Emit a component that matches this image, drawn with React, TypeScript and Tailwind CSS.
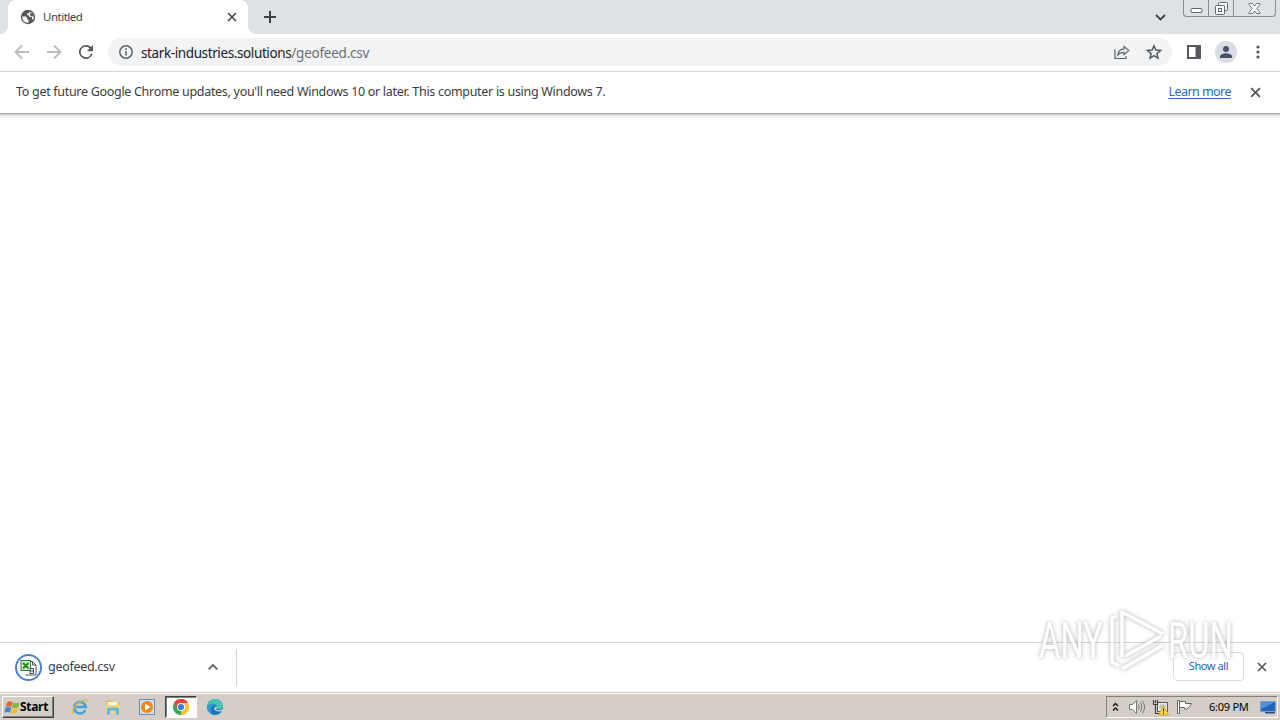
import type { ReactNode } from 'react'

function IconButton({ label, className, children }: { label: string; className: string; children: ReactNode }) {
  return (
    <button aria-label={label} className={`flex shrink-0 items-center justify-center ${className}`}>
      {children}
    </button>
  )
}

function Cross({ className }: { className: string }) {
  return (
    <svg viewBox="0 0 10 10" className={className} fill="none" stroke="currentColor" strokeWidth="1.7">
      <path d="M1 1l8 8M9 1L1 9" />
    </svg>
  )
}

function TabStrip() {
  return (
    <div className="flex h-[34px] bg-[#dee1e6]">
      {/* Active tab */}
      <div className="flex w-2 items-end bg-white">
        <div className="h-full w-2 rounded-br-lg bg-[#dee1e6]" />
      </div>
      <div className="flex h-[34px] w-60 items-center rounded-t-lg bg-white pl-3 pr-[11px]">
        <svg viewBox="0 0 16 16" className="h-4 w-4">
          <circle cx="8" cy="8" r="7.200" fill="#55585c" />
          <path d="M2.300 7.500h3.200q1.500 0 1.500 1.500v1.500h1.500v3.200C4.500 14 2 11 2.300 7.500z" fill="#fff" />
          <path d="M9.500 2.500v1.700H7.300v2H9v1.600h3v2.400l1.300.3C15 6.500 12.500 3.500 9.500 2.500z" fill="#fff" />
          <path d="M10.500 3.200l2.800 2.300.3 3-1.300-1.500h-2V5.500z" fill="#55585c" />
        </svg>
        <span className="ml-[7px] text-[11.5px] tracking-[-0.5px] text-[#3c4043]">Untitled</span>
        <IconButton label="Close tab" className="ml-auto text-[#45484c]">
          <Cross className="h-[10px] w-[10px]" />
        </IconButton>
      </div>
      <div className="h-full w-2 bg-white">
        <div className="h-full w-2 rounded-bl-lg bg-[#dee1e6]" />
      </div>
      <IconButton label="New tab" className="ml-[7px] h-[34px] w-[14px] text-[#3c4043]">
        <svg viewBox="0 0 14 14" className="h-[14px] w-[14px]" stroke="currentColor" strokeWidth="2">
          <path d="M7 1v12M1 7h12" />
        </svg>
      </IconButton>

      {/* Window controls */}
      <IconButton label="Search tabs" className="ml-auto mr-[17px] h-[34px] w-[11px] text-[#3c4043]">
        <svg viewBox="0 0 11 7" className="h-[7px] w-[11px]" fill="none" stroke="currentColor" strokeWidth="1.8">
          <path d="M1 1l4.500 4.500L10 1" />
        </svg>
      </IconButton>
      <div className="mr-1 flex h-[17px] w-[93px] rounded-b-[4px] border border-t-0 border-[#878b93] text-[#62666d]">
        <IconButton label="Minimize" className="w-[25px] border-r border-[#878b93] pt-1">
          <svg viewBox="0 0 13 5" className="h-[5px] w-[13px]" fill="#fff" stroke="currentColor">
            <rect x="1" y=".5" width="11" height="4" rx="1" />
          </svg>
        </IconButton>
        <IconButton label="Restore" className="w-[25px] border-r border-[#878b93]">
          <svg viewBox="0 0 13 13" className="h-[13px] w-[13px]" fill="#f5f6f8" stroke="currentColor">
            <rect x="3.500" y=".5" width="9" height="8" rx="1" />
            <rect x=".5" y="3.500" width="9" height="9" rx="1" />
            <rect x="3.500" y="6.500" width="3" height="3" />
          </svg>
        </IconButton>
        <IconButton label="Close" className="flex-1">
          <svg viewBox="0 0 13 11" className="h-[11px] w-[13px]" fill="#fff" stroke="currentColor" strokeWidth=".9">
            <path d="M1 .5h3.500l2 2.500 2-2.500H12v1.200L8.700 5.500 12 9.300v1.200H8.500l-2-2.500-2 2.500H1V9.300l3.300-3.800L1 1.700z" />
          </svg>
        </IconButton>
      </div>
    </div>
  )
}

function Toolbar() {
  return (
    <div className="flex h-[38px] items-center border-b border-[#d5d7da] bg-white pb-px">
      <IconButton label="Back" className="ml-[14px] w-4 text-[#babcbe]">
        <svg viewBox="0 0 16 16" className="h-4 w-4" fill="none" stroke="currentColor" strokeWidth="1.800">
          <path d="M15 8H2M8 1.500L1.500 8 8 14.500" />
        </svg>
      </IconButton>
      <IconButton label="Forward" className="ml-4 w-4 text-[#babcbe]">
        <svg viewBox="0 0 16 16" className="h-4 w-4" fill="none" stroke="currentColor" strokeWidth="1.800">
          <path d="M1 8h13M8 1.500L14.500 8 8 14.500" />
        </svg>
      </IconButton>
      <IconButton label="Reload" className="ml-4 w-4 text-[#55585c]">
        <svg viewBox="4 4 16 16" className="h-[14px] w-[14px]" fill="currentColor">
          <path d="M17.650 6.350A8 8 0 1 0 19.730 14h-2.080A6 6 0 1 1 12 6c1.660 0 3.140.69 4.220 1.780L13 11h7V4z" />
        </svg>
      </IconButton>

      {/* Address bar */}
      <div className="ml-[14px] flex h-7 w-[1064px] items-center rounded-full bg-[#f1f3f4] pl-[11px] pr-[10px]">
        <svg viewBox="0 0 14 14" className="h-[14px] w-[14px]" fill="none" stroke="#5f6368" strokeWidth="1.500">
          <circle cx="7" cy="7" r="6.200" />
          <path d="M7 6v4.500M7 3.300v1.600" strokeWidth="1.600" />
        </svg>
        <span className="ml-2 whitespace-nowrap pt-[2px] text-[13.5px] text-[#202124]">
          <span className="tracking-[-0.39px]">stark-industries.solutions</span>
          <span className="tracking-[-0.24px] text-[#6b6f74]">/geofeed.csv</span>
        </span>
        <IconButton label="Share" className="ml-auto text-[#5f6368]">
          <svg viewBox="0 0 16 15" className="h-[15px] w-4" fill="none" stroke="currentColor" strokeWidth="1.200">
            <path d="M1 4.500v9h11V11" />
            <path d="M10 1.500v2.300C6.500 4 4.300 6 3.700 10 5.200 8.200 7 7.400 10 7.400v2.300L14.800 5.600z" />
          </svg>
        </IconButton>
        <IconButton label="Bookmark this tab" className="ml-4 text-[#55585c]">
          <svg viewBox="1 1 22 22" className="h-4 w-4" fill="none" stroke="currentColor" strokeWidth="2.100">
            <path d="M12 3.500l2.500 5.900 6.400.55-4.850 4.200 1.450 6.250L12 17.100 6.500 20.400l1.450-6.250-4.850-4.200 6.400-.55z" />
          </svg>
        </IconButton>
      </div>

      <IconButton label="Side panel" className="ml-[15px]">
        <svg viewBox="0 0 14 14" className="h-[14px] w-[14px]">
          <rect x="1" y="1" width="12" height="12" fill="#fff" stroke="#55585c" strokeWidth="2" />
          <rect x="8.500" y="1" width="5" height="12" fill="#55585c" />
        </svg>
      </IconButton>
      <IconButton label="Profile" className="ml-[14px] h-[22px] w-[22px] rounded-full bg-[#dadde2]">
        <svg viewBox="0 0 12 12" className="h-3 w-3" fill="#48536b">
          <circle cx="6" cy="3" r="3" />
          <path d="M0 12v-1.700C0 8.300 4 7.300 6 7.300s6 1 6 3V12z" />
        </svg>
      </IconButton>
      <IconButton label="Menu" className="ml-[19px]">
        <svg viewBox="0 0 4 14" className="h-[14px] w-1" fill="#55585c">
          <circle cx="2" cy="2" r="1.600" />
          <circle cx="2" cy="7" r="1.600" />
          <circle cx="2" cy="12" r="1.600" />
        </svg>
      </IconButton>
    </div>
  )
}

function UpdateBar() {
  return (
    <div className="flex h-[41px] items-center bg-white pb-px pl-4 pr-[19px] text-[12.5px] shadow-[0_1px_1px_#a6a6a6,0_2px_3px_1px_#d4d4d4]">
      <span className="whitespace-nowrap tracking-[-0.3px] text-[#3a3c40]">
        To get future Google Chrome updates, you'll need Windows 10 or later. This computer is using Windows 7.
      </span>
      <a className="ml-auto whitespace-nowrap tracking-[-0.54px] text-[#2a69b9] underline underline-offset-2">
        Learn more
      </a>
      <IconButton label="Dismiss" className="ml-[19px] text-[#55585c]">
        <Cross className="h-[11px] w-[11px]" />
      </IconButton>
    </div>
  )
}

function DownloadShelf() {
  return (
    <div className="flex h-[50px] shrink-0 items-center border-t border-[#d5d5d5] bg-white pb-px">
      <div className="flex h-[37px] w-[237px] items-center border-r border-[#d0d2d5] pl-[15px] pr-[18px]">
        <div className="flex h-[27px] w-[27px] items-center justify-center rounded-full border-2 border-[#4a80d4]">
          <svg viewBox="0 0 17 17" className="h-[17px] w-[17px] shrink-0">
            <path d="M6.500 2.500h6l3.500 3.500v10H5.500" fill="#fff" stroke="#4c5358" />
            <path d="M12.500 2.500V6H16" fill="none" stroke="#4c5358" />
            <rect x="1" y="1.500" width="9.500" height="10" fill="#d9f2cf" stroke="#2d7b2a" />
            <path d="M3 4l5.500 5.500M8.500 4L3 9.500" stroke="#238421" strokeWidth="1.800" />
            <path d="M10 9.500h3.500v5H10zM10 12h3.500" fill="#fff" stroke="#30455e" />
          </svg>
        </div>
        <span className="ml-[6px] text-[12.5px] tracking-[-0.3px] text-[#3c4043]">geofeed.csv</span>
        <IconButton label="Download options" className="ml-auto text-[#55585c]">
          <svg viewBox="0 0 10 6" className="h-[6px] w-[10px]" fill="none" stroke="currentColor" strokeWidth="1.700">
            <path d="M.7 5.300L5 1l4.300 4.300" />
          </svg>
        </IconButton>
      </div>
      <button className="mb-[2px] ml-auto h-[29px] w-[71px] rounded-[4px] border border-[#dadce0] text-[11px] tracking-[-0.4px] text-[#2166c2]">
        Show all
      </button>
      <IconButton label="Close downloads" className="ml-[13px] mr-[13px] text-[#55585c]">
        <Cross className="h-[10px] w-[10px]" />
      </IconButton>
    </div>
  )
}

function Watermark() {
  return (
    <svg
      viewBox="0 0 220 88"
      className="pointer-events-none absolute left-[1030px] top-[596px] h-[88px] w-[220px] opacity-85 drop-shadow-[0_0_2px_#a0a0a0]"
      fill="none"
    >
      <g fill="#fff" fontFamily="Roboto" fontSize="50">
        <text x="9" y="62" textLength="64" lengthAdjust="spacingAndGlyphs">ANY</text>
        <text x="138" y="62" textLength="65" lengthAdjust="spacingAndGlyphs">RUN</text>
      </g>
      <g stroke="#fff" strokeWidth="3.500" strokeLinejoin="round">
        <path d="M92 61V16l41 22" />
        <path d="M87 20l-5 2v44l7 4M95 60l36-20M92 73l41-24" />
      </g>
    </svg>
  )
}

function WindowsFlag() {
  return (
    <svg viewBox="0 0 16 15" className="h-[15px] w-4 shrink-0">
      <path d="M3 2.500Q6 .5 8.500 2L7.300 7Q4.500 5.700 1.800 7z" fill="#e8602c" />
      <path d="M9.300 2.500Q12 4 15.500 2.200L14 7.200Q11 8.800 8 7.400z" fill="#82b83b" />
      <path d="M1.500 7.800Q4.500 6.300 7.100 7.800L6 12.700Q3.500 11.300.3 12.700z" fill="#3f85cf" />
      <path d="M7.900 8.200Q11 9.500 13.800 8L12.600 12.800Q9.500 14.500 6.700 13z" fill="#f4bd30" />
    </svg>
  )
}

function Taskbar() {
  return (
    <div className="flex h-7 shrink-0 items-start border-t border-[#c9c6c1] bg-[#d5cec7] pt-[3px] shadow-[inset_0_1px_0_#fff]">
      <button className="ml-[2px] flex h-[22px] w-[52px] items-center border border-b-[#404040] border-l-white border-r-[#404040] border-t-white pl-[1px] text-[12px] font-bold tracking-[-0.3px] text-black shadow-[inset_-1px_-1px_0_#808080]">
        <WindowsFlag />
        <span>Start</span>
      </button>

      {/* Pinned apps */}
      <div className="flex h-[22px] items-center">
        <IconButton label="Internet Explorer" className="ml-[17px] w-[18px]">
          <svg viewBox="0 0 18 18" className="h-[18px] w-[18px]" fill="none">
            <path d="M14.300 12.200A5.800 5.800 0 1 1 14.800 9H5" stroke="#42a3de" strokeWidth="2.600" />
            <path d="M2.500 15.800C-1 14 4.500 6 10 3.200c5-2.600 7-1.500 5.500 1.800" stroke="#e4b540" strokeWidth="1.300" />
          </svg>
        </IconButton>
        <IconButton label="Explorer" className="ml-[15px] w-[18px]">
          <svg viewBox="0 0 18 18" className="h-[18px] w-[18px]">
            <path d="M2 2.500h5l1 1.500h7.500V15H2z" fill="#e0bd58" />
            <path d="M3.500 4h10v4h-10z" fill="#fff6cf" />
            <path d="M2 7h14v8H2z" fill="#f0d67c" />
            <path d="M3 16.500v-5Q3 9.500 5 9.500h8q2 0 2 2v5h-3v-4H6v4z" fill="#69b4dc" />
          </svg>
        </IconButton>
        <IconButton label="Media Player" className="ml-4 w-[18px]">
          <svg viewBox="0 0 18 18" className="h-[18px] w-[18px]">
            <rect x="1.500" y="1.500" width="15" height="15" fill="#cfe0f0" stroke="#6490bd" />
            <circle cx="9" cy="9" r="6" fill="#f08519" />
            <path d="M7 5.500v7L12.500 9z" fill="#fff" />
          </svg>
        </IconButton>
        <div className="ml-[9px] flex h-[22px] w-8 items-center justify-center border border-b-white border-l-[#404040] border-r-white border-t-[#404040] bg-white shadow-[inset_1px_1px_0_#808080]">
          <svg viewBox="0 0 16 16" className="h-4 w-4">
            <path d="M8 8L1.070 4A8 8 0 0 1 14.930 4z" fill="#de4938" />
            <path d="M8 8L14.930 4A8 8 0 0 1 8 16z" fill="#f8c52c" />
            <path d="M8 8v8A8 8 0 0 1 1.070 4z" fill="#37a457" />
            <path d="M8 4h6.930A8 8 0 0 0 1.070 4L4.500 10z" fill="#de4938" />
            <path d="M11.500 10L8 16a8 8 0 0 0 6.930-12H8z" fill="#f8c52c" />
            <circle cx="8" cy="8" r="4" fill="#fff" />
            <circle cx="8" cy="8" r="3.100" fill="#3d7be0" />
          </svg>
        </div>
        <IconButton label="Edge" className="ml-[9px] w-[18px]">
          <svg viewBox="0 0 18 18" className="h-[18px] w-[18px]">
            <circle cx="9" cy="9" r="8" fill="#1677bd" />
            <path d="M1 8.500C2 3 6 1 9 1c5 0 8 3.500 8 7 0 3-4.500 4-6.500 2.600C12.500 7 8 4 1 8.500z" fill="#48c5b0" />
            <path d="M1 8.500C4 4.500 9 5 10.500 7.500 6.500 6 3 10 6.500 16.500 3 15.300.6 12 1 8.500z" fill="#3197d9" />
            <path d="M10.300 8.300c1.500 2-1 2.700.7 3.600 1.800.8 4 .3 5.700-.8l.8 1.400c-4 2-9.200.3-9.200-1.500 0-1.200.8-2.400 2-2.700z" fill="#d5cec7" />
          </svg>
        </IconButton>
      </div>

      {/* Tray */}
      <div className="ml-auto mr-[2px] flex h-[22px] w-[172px] items-center border border-b-white border-l-[#808080] border-r-white border-t-[#808080]">
        <svg viewBox="0 0 7 10" className="ml-[5px] h-[10px] w-[7px] shrink-0" fill="none" stroke="#111" strokeWidth="1.400">
          <path d="M1 4l2.500-2.500L6 4M1 8.500L3.500 6 6 8.500" />
        </svg>
        <svg viewBox="0 0 18 16" className="ml-[9px] h-4 w-[18px] shrink-0" fill="none" stroke="#77797b">
          <path d="M1.500 5.500h3l4-4v13l-4-4h-3z" fill="#fff" />
          <path d="M10.500 5.500q1.500 2.500 0 5M12.500 3.500q3 4.500 0 9M14.500 2q4.200 6 0 12" />
        </svg>
        <svg viewBox="0 0 17 17" className="ml-[6px] h-[17px] w-[17px] shrink-0">
          <path d="M5.500 3.500h10v9h-10z" fill="#e9e9e6" stroke="#55585a" />
          <path d="M7.500 5.500h6v4h-6z" fill="#bec4c8" />
          <path d="M1.500 1v4.500h4V1M3.500 1v3M3.500 5.500v9h5" fill="none" stroke="#444" strokeWidth="1.200" />
          <path d="M11.500 6.500L16.500 16h-10z" fill="#ffdc32" stroke="#c39615" strokeWidth=".7" />
          <path d="M11.500 9.500v3M11.500 13.500V15" stroke="#333" strokeWidth="1.200" />
        </svg>
        <svg viewBox="0 0 17 16" className="ml-[7px] h-4 w-[17px] shrink-0" fill="#fff" stroke="#66696b">
          <path d="M1.500 1.500h2v13h-2z" />
          <path d="M3.500 2.500h6v2h6l-2 3.300L10.500 10h-2V8.500h-5z" />
        </svg>
        <span className="ml-4 whitespace-nowrap text-[11px] tracking-[-0.25px] text-black">6:09 PM</span>
        <svg viewBox="0 0 16 15" className="ml-auto mr-[1px] h-[15px] w-4 shrink-0">
          <path d="M.5 1.500h15v10H.5z" fill="#2366b7" stroke="#77a2cf" />
          <path d="M1 2h14L1 9z" fill="#4d91dd" />
          <path d="M5 12h10v1.500H5z" fill="#294d79" />
        </svg>
      </div>
    </div>
  )
}

export default function App() {
  return (
    <div className="relative flex h-[720px] w-[1280px] flex-col overflow-hidden bg-white font-['Noto_Sans','Liberation_Sans',sans-serif]">
      <TabStrip />
      <Toolbar />
      <UpdateBar />
      <main className="flex-1" />
      <DownloadShelf />
      <Taskbar />
      <Watermark />
    </div>
  )
}
